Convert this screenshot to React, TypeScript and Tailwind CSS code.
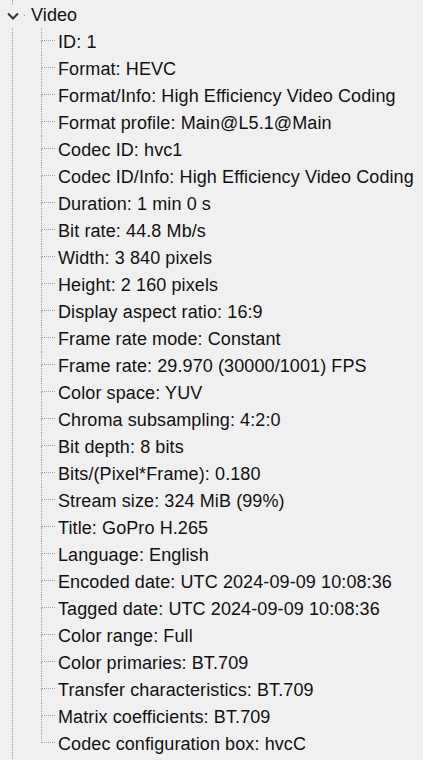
import React from 'react';

const fields: string[] = [
  'ID: 1',
  'Format: HEVC',
  'Format/Info: High Efficiency Video Coding',
  'Format profile: Main@L5.1@Main',
  'Codec ID: hvc1',
  'Codec ID/Info: High Efficiency Video Coding',
  'Duration: 1 min 0 s',
  'Bit rate: 44.8 Mb/s',
  'Width: 3 840 pixels',
  'Height: 2 160 pixels',
  'Display aspect ratio: 16:9',
  'Frame rate mode: Constant',
  'Frame rate: 29.970 (30000/1001) FPS',
  'Color space: YUV',
  'Chroma subsampling: 4:2:0',
  'Bit depth: 8 bits',
  'Bits/(Pixel*Frame): 0.180',
  'Stream size: 324 MiB (99%)',
  'Title: GoPro H.265',
  'Language: English',
  'Encoded date: UTC 2024-09-09 10:08:36',
  'Tagged date: UTC 2024-09-09 10:08:36',
  'Color range: Full',
  'Color primaries: BT.709',
  'Transfer characteristics: BT.709',
  'Matrix coefficients: BT.709',
  'Codec configuration box: hvcC',
];

const TreeLeaf: React.FC<{ label: string; last: boolean }> = ({ label, last }) => (
  <div className="flex h-[27px] items-stretch">
    {/* connector: vertical + horizontal dotted line */}
    <div className="flex w-[14px] shrink-0 flex-col">
      <div className="h-[13px] border-b border-l border-dotted border-[#a0a0a0]" />
      <div className={last ? 'flex-1' : 'flex-1 border-l border-dotted border-[#a0a0a0]'} />
    </div>
    <span className="ml-[3px] self-center whitespace-nowrap leading-none">{label}</span>
  </div>
);

export default function App() {
  return (
    <div
      className="h-[760px] w-[423px] overflow-hidden bg-[#f0f0f0] text-[18px] tracking-[0.1px] text-[#111]"
      style={{ fontFamily: '"Liberation Sans", Arial, sans-serif' }}
    >
      {/* node: Video */}
      <div className="ml-[12px] h-[4px] border-l border-dotted border-[#a0a0a0]" />
      <div className="flex h-[24px] items-center">
        <div className="flex w-[24px] shrink-0 justify-center pl-[1px]">
          <svg width="12" height="8" viewBox="0 0 12 8" className="-mt-[1px]">
            <path d="M1 1.5 L6 6.5 L11 1.5" fill="none" stroke="#333" strokeWidth="2" />
          </svg>
        </div>
        <div className="-mt-[1px] h-px w-px bg-[#a0a0a0]" />
        <span className="-mt-[2px] ml-[6px] leading-none">Video</span>
      </div>

      {/* children */}
      <div className="ml-[12px] border-l border-dotted border-[#a0a0a0] pl-[28px]">
        {fields.map((f, i) => (
          <TreeLeaf key={f} label={f} last={i === fields.length - 1} />
        ))}
        <div className="h-[40px]" />
      </div>
    </div>
  );
}
